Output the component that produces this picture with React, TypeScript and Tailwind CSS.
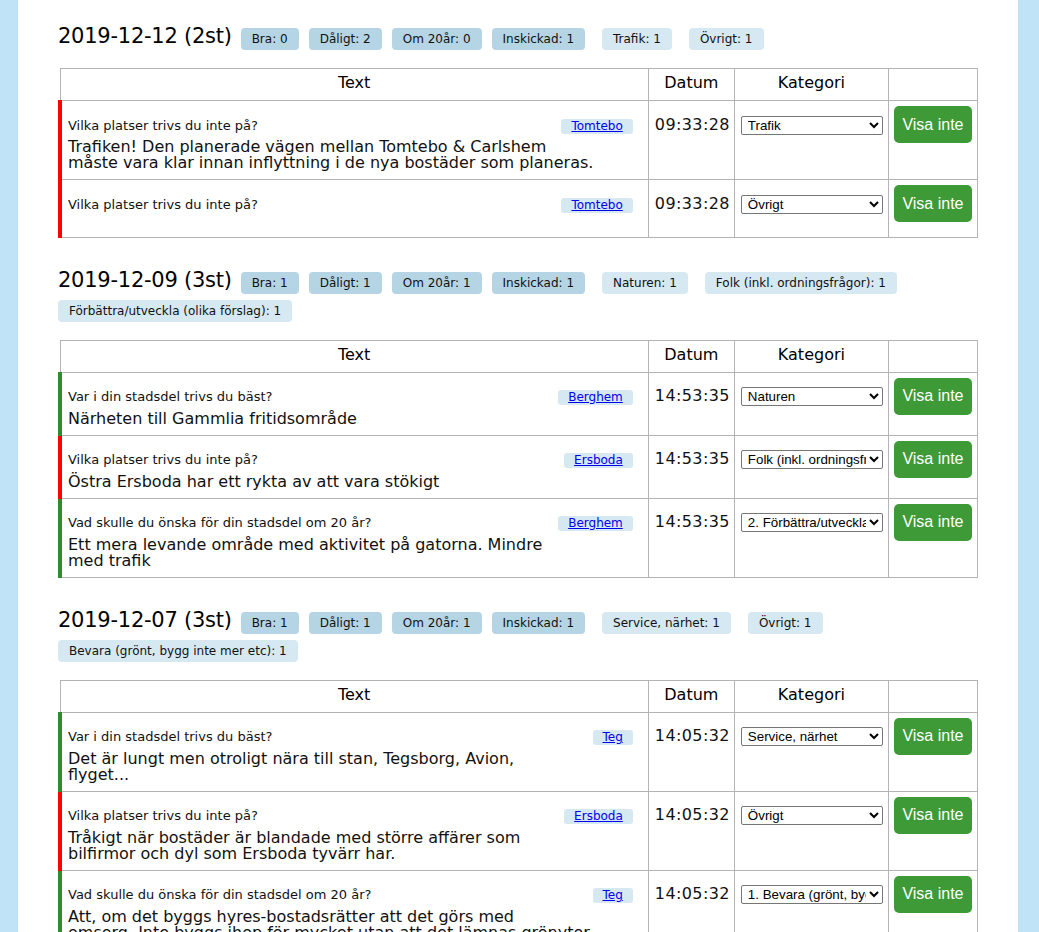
import React from "react";

type Row = {
  good: boolean;
  question: string;
  answer: string;
  place: string;
  time: string;
  category: string;
};

type Day = {
  title: string;
  stats: string[];
  cats: string[];
  rows: Row[];
};

const CATEGORIES = [
  "Trafik",
  "Övrigt",
  "Naturen",
  "Folk (inkl. ordningsfrågor)",
  "1. Bevara (grönt, bygg inte mer etc)",
  "2. Förbättra/utveckla (olika förslag)",
  "Service, närhet",
];

const Q_BAD = "Vilka platser trivs du inte på?";
const Q_GOOD = "Var i din stadsdel trivs du bäst?";
const Q_FUTURE = "Vad skulle du önska för din stadsdel om 20 år?";

const DAYS: Day[] = [
  {
    title: "2019-12-12 (2st)",
    stats: ["Bra: 0", "Dåligt: 2", "Om 20år: 0", "Inskickad: 1"],
    cats: ["Trafik: 1", "Övrigt: 1"],
    rows: [
      {
        good: false,
        question: Q_BAD,
        answer:
          "Trafiken! Den planerade vägen mellan Tomtebo & Carlshem måste vara klar innan inflyttning i de nya bostäder som planeras.",
        place: "Tomtebo",
        time: "09:33:28",
        category: "Trafik",
      },
      {
        good: false,
        question: Q_BAD,
        answer: "",
        place: "Tomtebo",
        time: "09:33:28",
        category: "Övrigt",
      },
    ],
  },
  {
    title: "2019-12-09 (3st)",
    stats: ["Bra: 1", "Dåligt: 1", "Om 20år: 1", "Inskickad: 1"],
    cats: [
      "Naturen: 1",
      "Folk (inkl. ordningsfrågor): 1",
      "Förbättra/utveckla (olika förslag): 1",
    ],
    rows: [
      {
        good: true,
        question: Q_GOOD,
        answer: "Närheten till Gammlia fritidsområde",
        place: "Berghem",
        time: "14:53:35",
        category: "Naturen",
      },
      {
        good: false,
        question: Q_BAD,
        answer: "Östra Ersboda har ett rykta av att vara stökigt",
        place: "Ersboda",
        time: "14:53:35",
        category: "Folk (inkl. ordningsfrågor)",
      },
      {
        good: true,
        question: Q_FUTURE,
        answer:
          "Ett mera levande område med aktivitet på gatorna. Mindre med trafik",
        place: "Berghem",
        time: "14:53:35",
        category: "2. Förbättra/utveckla (olika förslag)",
      },
    ],
  },
  {
    title: "2019-12-07 (3st)",
    stats: ["Bra: 1", "Dåligt: 1", "Om 20år: 1", "Inskickad: 1"],
    cats: [
      "Service, närhet: 1",
      "Övrigt: 1",
      "Bevara (grönt, bygg inte mer etc): 1",
    ],
    rows: [
      {
        good: true,
        question: Q_GOOD,
        answer:
          "Det är lungt men otroligt nära till stan, Tegsborg, Avion, flyget...",
        place: "Teg",
        time: "14:05:32",
        category: "Service, närhet",
      },
      {
        good: false,
        question: Q_BAD,
        answer:
          "Tråkigt när bostäder är blandade med större affärer som bilfirmor och dyl som Ersboda tyvärr har.",
        place: "Ersboda",
        time: "14:05:32",
        category: "Övrigt",
      },
      {
        good: true,
        question: Q_FUTURE,
        answer:
          "Att, om det byggs hyres-bostadsrätter att det görs med omsorg. Inte byggs ihop för mycket utan att det lämnas grönytor.",
        place: "Teg",
        time: "14:05:32",
        category: "1. Bevara (grönt, bygg inte mer etc)",
      },
    ],
  },
];

function DaySection({ day, first }: { day: Day; first: boolean }) {
  return (
    <section className={first ? "" : "mt-[29px]"}>
      {/* Heading + badges */}
      <div className="flex flex-wrap items-baseline gap-y-[6px] mb-[18px]">
        <h2 className="text-[21px] leading-[26px] tracking-[-0.25px] text-black mr-[9px] font-normal">
          {day.title}
        </h2>
        {day.stats.map((s) => (
          <span
            key={s}
            className="h-[22px] leading-[22px] px-[11px] mr-[10px] rounded-[4px] bg-[#b5d5e5] text-[12px] text-[#111]"
          >
            {s}
          </span>
        ))}
        <span className="w-[7px]" />
        {day.cats.map((c) => (
          <span
            key={c}
            className="h-[22px] leading-[22px] px-[11px] mr-[17px] rounded-[4px] bg-[#d6e8f2] text-[12px] text-[#111]"
          >
            {c}
          </span>
        ))}
      </div>

      {/* Table */}
      <table className="w-[920px] table-fixed border-collapse">
        <thead>
          <tr>
            <th className="w-[588px] border border-[#b4b4b4] pt-[3px] pb-[7px] text-[16px] leading-[21px] font-normal text-center">
              Text
            </th>
            <th className="w-[86px] border border-[#b4b4b4] pt-[3px] pb-[7px] text-[16px] leading-[21px] font-normal text-center">
              Datum
            </th>
            <th className="w-[154px] border border-[#b4b4b4] pt-[3px] pb-[7px] text-[16px] leading-[21px] font-normal text-center">
              Kategori
            </th>
            <th className="w-[89px] border border-[#b4b4b4]" />
          </tr>
        </thead>
        <tbody>
          {day.rows.map((r, i) => (
            <tr key={i}>
              <td
                className={
                  "align-baseline border border-[#b4b4b4] border-l-4 pl-[6px] pr-[6px] pt-[5px] pb-[8px] " +
                  (r.good ? "border-l-[#2e8b2e]" : "border-l-[#ff0000]")
                }
              >
                <div className="float-right w-[80px] text-right mr-[9px] mt-[3px] mb-[16px] text-[12px] leading-[15px]">
                  <span className="inline-block align-top h-[15px] px-[10px] rounded-[3px] bg-[#d6e8f2]">
                    <a href="#" className="text-[#0000ee] underline">
                      {r.place}
                    </a>
                  </span>
                </div>
                <div className="text-[13px] text-[#111]">{r.question}</div>
                {r.answer && (
                  <div className="mt-[4px] text-[16px] leading-[16px] text-[#111]">
                    {r.answer}
                  </div>
                )}
              </td>
              <td className="align-baseline border border-[#b4b4b4] pl-[6px] pr-0 pt-[5px] pb-[8px] text-[16px] tracking-[0.4px] text-[#111] whitespace-nowrap">
                {r.time}
              </td>
              <td className="align-baseline border border-[#b4b4b4] px-[6px] pt-[5px] pb-[8px]">
                <select
                  defaultValue={r.category}
                  className="w-[142px] h-[19px] pl-[2px] border border-[#767676] rounded-[2px] bg-white text-[13.33px] text-black [font-family:'Liberation_Sans',Arial,sans-serif]"
                >
                  {CATEGORIES.map((c) => (
                    <option key={c} value={c}>
                      {c}
                    </option>
                  ))}
                </select>
              </td>
              <td className="align-baseline border border-[#b4b4b4] px-[5px] pt-[5px] pb-[8px]">
                <button className="h-[37px] w-[78px] rounded-[5px] bg-[#3d9a37] text-white text-[16px] [font-family:'Liberation_Sans',Arial,sans-serif]">
                  Visa inte
                </button>
              </td>
            </tr>
          ))}
        </tbody>
      </table>
    </section>
  );
}

export default function App() {
  return (
    <div className="min-h-screen bg-[#c1e3f8] pl-[18px] [font-family:'DejaVu_Sans',Verdana,sans-serif]">
      <main className="w-[1000px] min-h-screen bg-white px-[40px] pt-[23px] pb-[40px]">
        {DAYS.map((d, i) => (
          <DaySection key={d.title} day={d} first={i === 0} />
        ))}
      </main>
    </div>
  );
}
